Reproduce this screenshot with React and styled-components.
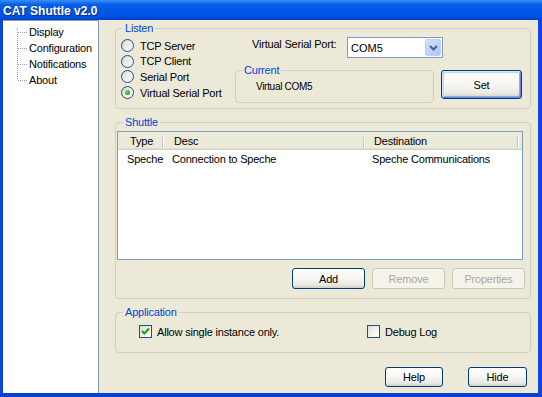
import React from "react";
import styled, { createGlobalStyle, css } from "styled-components";

const FONT = '"Liberation Sans", Arial, sans-serif';

const GlobalStyle = createGlobalStyle`
  html, body { margin: 0; padding: 0; background: #ffffff; }
  body { font-family: ${FONT}; }
  * { box-sizing: border-box; }
`;

const Window = styled.div`
  width: 542px;
  height: 397px;
  display: flex;
  flex-direction: column;
  overflow: hidden;
  font-family: ${FONT};
  font-size: 11px;
  letter-spacing: -0.2px;
  color: #000;
`;

const TitleBar = styled.div`
  height: 20px;
  flex: none;
  display: flex;
  align-items: center;
  padding: 1px 0 0 3px;
  background: linear-gradient(
    180deg,
    #3c8ef6 0%,
    #2a7ef5 8%,
    #0a5fe6 22%,
    #0055e4 50%,
    #0054e2 75%,
    #0049d6 92%,
    #003fc6 100%
  );
`;

const Title = styled.span`
  font-family: ${FONT};
  font-weight: bold;
  font-size: 12px;
  letter-spacing: 0;
  color: #ffffff;
  text-shadow: 1px 1px 0 #0a2a9a;
`;

const Frame = styled.div`
  flex: 1;
  display: flex;
  border-left: 3px solid #0a45e0;
  border-right: 4px solid #0a45e0;
  border-bottom: 4px solid #0a3fd8;
  box-shadow: inset 1px 0 0 #1b62f0;
`;

const Tree = styled.div`
  width: 96px;
  flex: none;
  background: #ffffff;
  border-right: 1px solid #7f9db9;
  border-top: 1px solid #7f9db9;
  padding-top: 3px;
  display: flex;
  flex-direction: column;
`;

const TreeRow = styled.div`
  height: 16px;
  display: flex;
  align-items: center;
  padding-left: 13px;
  white-space: nowrap;
`;

const TreeText = styled.span`
  margin-left: 1px;
  line-height: 14px;
`;

const Main = styled.div`
  flex: 1;
  background: #ece9d8;
  display: flex;
  flex-direction: column;
  padding: 8px 7px 0 16px;
`;

const GroupBox = styled.div`
  flex: none;
  height: ${(p) => p.$h}px;
  ${(p) => p.$w && css`width: ${p.$w}px;`}
  border: 1px solid #d0d0bf;
  border-radius: 4px;
  margin-top: ${(p) => p.$mt || 0}px;
  display: flex;
  flex-direction: column;
`;

const Legend = styled.div`
  width: fit-content;
  margin: -7px 0 0 ${(p) => p.$ml || 7}px;
  padding: 0 2px;
  line-height: 13px;
  height: 13px;
  background: #ece9d8;
  color: #0046d5;
  white-space: nowrap;
`;

/* ---------- Listen ---------- */
const ListenBody = styled.div`
  display: flex;
  padding-left: 5px;
`;

const RadioList = styled.div`
  width: 114px;
  flex: none;
  padding-top: 3px;
  display: flex;
  flex-direction: column;
`;

const RadioRow = styled.div`
  height: 15.6px;
  display: flex;
  align-items: center;
  white-space: nowrap;
`;

const RadioCircle = styled.span`
  width: 13px;
  height: 13px;
  flex: none;
  border-radius: 50%;
  border: 1px solid #1c5180;
  background: linear-gradient(135deg, #d6d3c8 0%, #ecebe5 45%, #ffffff 100%);
  display: flex;
  align-items: center;
  justify-content: center;
  margin-right: 6px;
`;

const RadioDot = styled.span`
  width: 5px;
  height: 5px;
  border-radius: 50%;
  background: radial-gradient(circle at 35% 35%, #6ee86a 0%, #29b12a 55%, #178a1a 100%);
`;

const ListenRight = styled.div`
  flex: 1;
  display: flex;
  flex-direction: column;
  padding-top: 2px;
`;

const PortRow = styled.div`
  display: flex;
  align-items: flex-start;
  height: 21px;
`;

const FieldLabel = styled.span`
  width: 95px;
  margin-left: 17px;
  line-height: 13px;
  padding-top: 1px;
  white-space: nowrap;
`;

const Combo = styled.div`
  width: 96px;
  height: 21px;
  border: 1px solid #7f9db9;
  background: #ffffff;
  display: flex;
  align-items: center;
  justify-content: space-between;
  padding: 0 1px 0 3px;
  letter-spacing: 0;
`;

const ComboButton = styled.span`
  width: 16px;
  height: 17px;
  border: 1px solid #bcd0fa;
  border-radius: 2px;
  background: linear-gradient(135deg, #d4e2fd 0%, #bfd2fb 50%, #aec4f5 100%);
  display: flex;
  align-items: center;
  justify-content: center;
`;

const CurrentRow = styled.div`
  display: flex;
  align-items: flex-start;
  margin-top: 12px;
`;

const SmallText = styled.span`
  font-size: 10px;
  letter-spacing: -0.3px;
  line-height: 12px;
  margin: 4px 0 0 20px;
`;

const Button = styled.button`
  flex: none;
  width: ${(p) => p.$w}px;
  height: ${(p) => p.$h}px;
  margin-left: ${(p) => p.$ml || 0}px;
  padding: 0;
  border: 1px solid #003c74;
  border-radius: 3px;
  background: linear-gradient(180deg, #ffffff 0%, #f7f7f4 45%, #ecebe6 80%, #d6d0c5 100%);
  font-family: ${FONT};
  font-size: 11px;
  letter-spacing: -0.2px;
  color: #000;
  ${(p) =>
    p.$focus &&
    css`
      box-shadow: inset 1px 1px 0 #cee7ff, inset -1px -1px 0 #6982ee,
        inset 2px 2px 0 #bcd4f6, inset -2px -2px 0 #89ade4;
    `}
  &:disabled {
    border-color: #c9c7ba;
    color: #aca899;
    background: #f5f4ea;
  }
`;

/* ---------- Shuttle ---------- */
const ListView = styled.div`
  margin: 2px 0 0 1px;
  width: 406px;
  height: 129px;
  border: 1px solid #7f9db9;
  background: #ffffff;
  display: flex;
  flex-direction: column;
`;

const ListGrid = styled.div`
  display: grid;
  grid-template-columns: 46px 201px 154px 1fr;
`;

const HeaderCell = styled.div`
  height: 18px;
  background: #ebeadb;
  border-bottom: 1px solid #d6d2c2;
  box-shadow: inset 0 -1px 0 #e2decd;
  display: flex;
  align-items: center;
  justify-content: space-between;
  padding-left: ${(p) => p.$pl || 0}px;
  white-space: nowrap;
`;

const HeaderSep = styled.span`
  width: 2px;
  height: 12px;
  border-left: 1px solid #cbc7b8;
  border-right: 1px solid #ffffff;
  margin-top: 2px;
`;

const Cell = styled.div`
  height: 17px;
  display: flex;
  align-items: center;
  padding-left: ${(p) => p.$pl || 0}px;
  white-space: nowrap;
`;

const ButtonRow = styled.div`
  display: flex;
  justify-content: flex-end;
  gap: 7px;
  margin-top: 8px;
  padding-right: 5px;
`;

/* ---------- Application ---------- */
const CheckRow = styled.div`
  display: flex;
  align-items: center;
  margin-top: 6px;
  padding-left: 23px;
`;

const CheckItem = styled.label`
  display: flex;
  align-items: center;
  width: ${(p) => (p.$w ? `${p.$w}px` : "auto")};
  white-space: nowrap;
`;

const CheckBox = styled.span`
  width: 13px;
  height: 13px;
  flex: none;
  border: 1px solid #1c5180;
  background: linear-gradient(135deg, #dcdcd5 0%, #efeee9 45%, #ffffff 100%);
  display: flex;
  align-items: center;
  justify-content: center;
  margin-right: 5px;
`;

const BottomBar = styled.div`
  display: flex;
  justify-content: flex-end;
  gap: 25px;
  margin-top: 14px;
  padding-right: 4px;
`;

function TreeLine({ kind }) {
  const y1 = kind === "first" ? 4 : 0;
  const y2 = kind === "last" ? 8 : 16;
  return (
    <svg width="12" height="16" viewBox="0 0 12 16" shapeRendering="crispEdges">
      <line x1="1.5" y1={y1} x2="1.5" y2={y2} stroke="#a0a0a0" strokeDasharray="1 1" />
      <line x1="2" y1="8.5" x2="11" y2="8.5" stroke="#a0a0a0" strokeDasharray="1 1" />
    </svg>
  );
}

function Radio({ label, checked }) {
  return (
    <RadioRow>
      <RadioCircle>{checked && <RadioDot />}</RadioCircle>
      {label}
    </RadioRow>
  );
}

function Check({ label, checked, w }) {
  return (
    <CheckItem $w={w}>
      <CheckBox>
        {checked && (
          <svg width="9" height="9" viewBox="0 0 9 9">
            <path d="M1 4 L3.4 6.5 L8 1.6" stroke="#21a121" strokeWidth="2.2" fill="none" />
          </svg>
        )}
      </CheckBox>
      {label}
    </CheckItem>
  );
}

const treeItems = ["Display", "Configuration", "Notifications", "About"];

export default function App() {
  return (
    <>
      <GlobalStyle />
      <Window>
        <TitleBar>
          <Title>CAT Shuttle v2.0</Title>
        </TitleBar>
        <Frame>
          <Tree>
            {treeItems.map((t, i) => (
              <TreeRow key={t}>
                <TreeLine kind={i === 0 ? "first" : i === treeItems.length - 1 ? "last" : "mid"} />
                <TreeText>{t}</TreeText>
              </TreeRow>
            ))}
          </Tree>
          <Main>
            <GroupBox $h={81}>
              <Legend>Listen</Legend>
              <ListenBody>
                <RadioList>
                  <Radio label="TCP Server" />
                  <Radio label="TCP Client" />
                  <Radio label="Serial Port" />
                  <Radio label="Virtual Serial Port" checked />
                </RadioList>
                <ListenRight>
                  <PortRow>
                    <FieldLabel>Virtual Serial Port:</FieldLabel>
                    <Combo>
                      <span>COM5</span>
                      <ComboButton>
                        <svg width="9" height="6" viewBox="0 0 9 6">
                          <path d="M1 1 L4.5 4.5 L8 1" stroke="#4d6185" strokeWidth="2" fill="none" />
                        </svg>
                      </ComboButton>
                    </Combo>
                  </PortRow>
                  <CurrentRow>
                    <GroupBox $h={33} $w={199}>
                      <Legend $ml={6}>Current</Legend>
                      <SmallText>Virtual COM5</SmallText>
                    </GroupBox>
                    <Button $w={81} $h={29} $ml={7} $focus>
                      Set
                    </Button>
                  </CurrentRow>
                </ListenRight>
              </ListenBody>
            </GroupBox>

            <GroupBox $h={177} $mt={13}>
              <Legend>Shuttle</Legend>
              <ListView>
                <ListGrid>
                  <HeaderCell $pl={12}>
                    Type
                    <HeaderSep />
                  </HeaderCell>
                  <HeaderCell $pl={10}>
                    Desc
                    <HeaderSep />
                  </HeaderCell>
                  <HeaderCell $pl={9}>
                    Destination
                    <HeaderSep />
                  </HeaderCell>
                  <HeaderCell />
                  <Cell $pl={9}>Speche</Cell>
                  <Cell $pl={8}>Connection to Speche</Cell>
                  <Cell $pl={7}>Speche Communications</Cell>
                  <Cell />
                </ListGrid>
              </ListView>
              <ButtonRow>
                <Button $w={73} $h={21}>
                  Add
                </Button>
                <Button $w={73} $h={21} disabled>
                  Remove
                </Button>
                <Button $w={73} $h={21} disabled>
                  Properties
                </Button>
              </ButtonRow>
            </GroupBox>

            <GroupBox $h={41} $mt={13}>
              <Legend>Application</Legend>
              <CheckRow>
                <Check label="Allow single instance only." checked w={228} />
                <Check label="Debug Log" />
              </CheckRow>
            </GroupBox>

            <BottomBar>
              <Button $w={58} $h={20}>
                Help
              </Button>
              <Button $w={59} $h={20}>
                Hide
              </Button>
            </BottomBar>
          </Main>
        </Frame>
      </Window>
    </>
  );
}
